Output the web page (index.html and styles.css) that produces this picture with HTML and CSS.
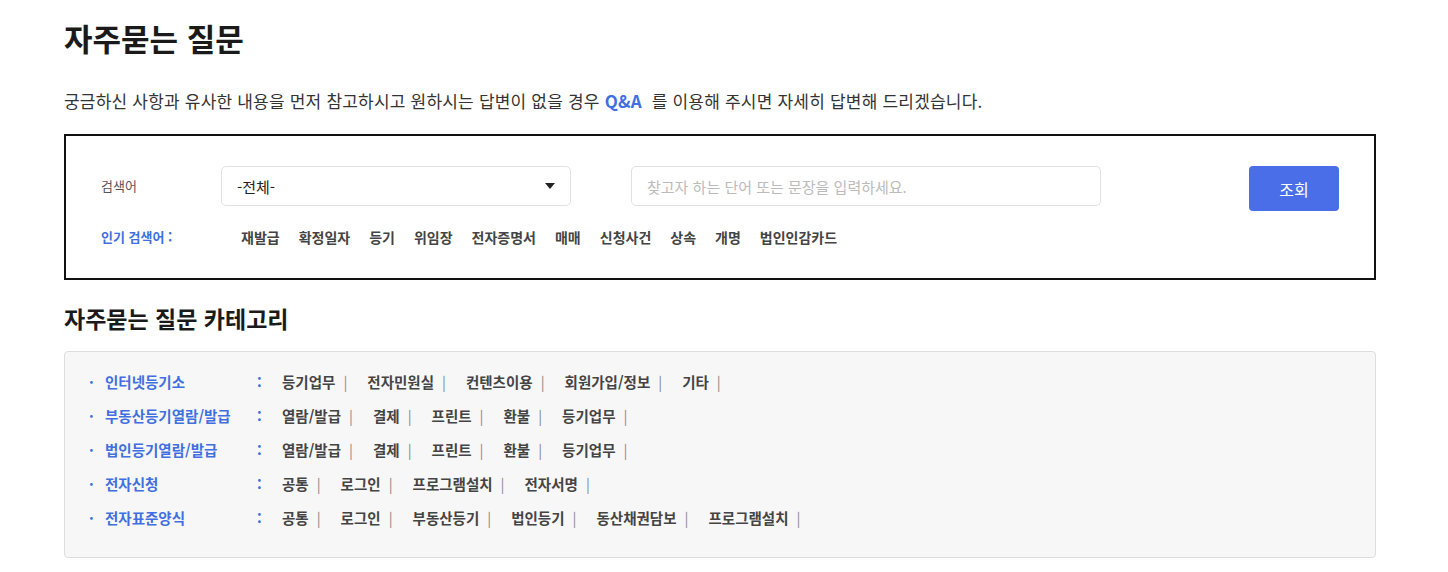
FILE: index.html
```html
<!DOCTYPE html>
<html lang="ko">
<head>
    <meta charset="utf-8">
    <title>자주묻는 질문</title>
    <link rel="stylesheet" href="styles.css">
</head>
<body>
    <div class="main">
        <h1 class="title">자주묻는 질문</h1>
        <p class="desc">궁금하신 사항과 유사한 내용을 먼저 참고하시고 원하시는 답변이 없을 경우 <b class="qna">Q&amp;A</b>&nbsp; 를 이용해 주시면 자세히 답변해 드리겠습니다.</p>

        <div class="search">
            <div class="search-row">
                <span class="label">검색어</span>
                <div class="select">
                    <span>-전체-</span>
                    <span class="arrow"></span>
                </div>
                <input class="keyword" type="text" placeholder="찾고자 하는 단어 또는 문장을 입력하세요.">
                <button class="btn">조회</button>
            </div>
            <div class="popular">
                <span class="label blue">인기 검색어 :</span>
                <ul class="tags">
                    <li>재발급</li>
                    <li>확정일자</li>
                    <li>등기</li>
                    <li>위임장</li>
                    <li>전자증명서</li>
                    <li>매매</li>
                    <li>신청사건</li>
                    <li>상속</li>
                    <li>개명</li>
                    <li>법인인감카드</li>
                </ul>
            </div>
        </div>

        <h2 class="sub">자주묻는 질문 카테고리</h2>
        <div class="cat">
            <div class="cat-row">
                <span class="cat-name">인터넷등기소</span>
                <span class="colon">:</span>
                <span class="item">등기업무<i>|</i></span>
                <span class="item">전자민원실<i>|</i></span>
                <span class="item">컨텐츠이용<i>|</i></span>
                <span class="item">회원가입/정보<i>|</i></span>
                <span class="item">기타<i>|</i></span>
            </div>
            <div class="cat-row">
                <span class="cat-name">부동산등기열람/발급</span>
                <span class="colon">:</span>
                <span class="item">열람/발급<i>|</i></span>
                <span class="item">결제<i>|</i></span>
                <span class="item">프린트<i>|</i></span>
                <span class="item">환불<i>|</i></span>
                <span class="item">등기업무<i>|</i></span>
            </div>
            <div class="cat-row">
                <span class="cat-name">법인등기열람/발급</span>
                <span class="colon">:</span>
                <span class="item">열람/발급<i>|</i></span>
                <span class="item">결제<i>|</i></span>
                <span class="item">프린트<i>|</i></span>
                <span class="item">환불<i>|</i></span>
                <span class="item">등기업무<i>|</i></span>
            </div>
            <div class="cat-row">
                <span class="cat-name">전자신청</span>
                <span class="colon">:</span>
                <span class="item">공통<i>|</i></span>
                <span class="item">로그인<i>|</i></span>
                <span class="item">프로그램설치<i>|</i></span>
                <span class="item">전자서명<i>|</i></span>
            </div>
            <div class="cat-row">
                <span class="cat-name">전자표준양식</span>
                <span class="colon">:</span>
                <span class="item">공통<i>|</i></span>
                <span class="item">로그인<i>|</i></span>
                <span class="item">부동산등기<i>|</i></span>
                <span class="item">법인등기<i>|</i></span>
                <span class="item">동산채권담보<i>|</i></span>
                <span class="item">프로그램설치<i>|</i></span>
            </div>
        </div>
    </div>
</body>
</html>
```

FILE: styles.css
```css
* {
    box-sizing: border-box;
}

body {
    margin: 0;
    font-family: "Noto Sans CJK KR", "Noto Sans", sans-serif;
    color: #222;
    background: #fff;
}

.main {
    width: 1312px;
    margin-left: 64px;
    padding-top: 14px;
}

.title {
    margin: 0;
    font-size: 31px;
    line-height: 48px;
    font-weight: 700;
    color: #1a1a1a;
}

.desc {
    margin: 24px 0 0;
    font-size: 17px;
    letter-spacing: 0.2px;
    line-height: 30px;
    color: #333;
}

.qna {
    color: #3f6fe0;
    font-weight: 700;
}

.search {
    margin-top: 18px;
    height: 146px;
    border: 2px solid #111;
    padding: 30px 35px 0;
}

.search-row {
    display: flex;
    align-items: flex-start;
}

.label {
    width: 120px;
    font-size: 13px;
    color: #555;
    line-height: 40px;
}

.popular .label {
    width: 140px;
}

.blue {
    color: #3f6fe0;
    font-weight: 700;
    line-height: 20px;
}

.select {
    width: 350px;
    height: 40px;
    border: 1px solid #e2e2e2;
    border-radius: 5px;
    display: flex;
    align-items: center;
    justify-content: space-between;
    padding: 0 15px;
    font-size: 15px;
    color: #222;
}

.arrow {
    width: 0;
    height: 0;
    border-left: 5px solid transparent;
    border-right: 5px solid transparent;
    border-top: 6px solid #222;
}

.keyword {
    margin-left: 60px;
    width: 470px;
    height: 40px;
    border: 1px solid #e2e2e2;
    border-radius: 5px;
    padding: 0 15px;
    font-family: inherit;
    font-size: 15px;
    outline: none;
}

.keyword::placeholder {
    color: #bbb;
}

.btn {
    margin-left: auto;
    width: 90px;
    height: 45px;
    border: none;
    border-radius: 4px;
    background: #4a6ee8;
    color: #fff;
    font-family: inherit;
    font-size: 16px;
}

.popular {
    display: flex;
    align-items: center;
    margin-top: 16px;
}

.tags {
    display: flex;
    gap: 19px;
    margin: 0;
    padding: 0;
    list-style: none;
    font-size: 14px;
    font-weight: 700;
    color: #444;
    line-height: 20px;
}

.sub {
    margin: 21px 0 0;
    font-size: 23px;
    line-height: 34px;
    font-weight: 700;
    color: #1a1a1a;
}

.cat {
    margin-top: 16px;
    height: 207px;
    background: #f7f7f7;
    border: 1px solid #dedede;
    border-radius: 4px;
    padding: 12px 24px 0;
}

.cat-row {
    display: flex;
    align-items: center;
    height: 34px;
    font-size: 14.5px;
    font-weight: 700;
}

.cat-name {
    width: 168px;
    color: #3f6fe0;
}

.cat-name::before {
    content: "·";
    display: inline-block;
    width: 16px;
    color: #3f6fe0;
}

.colon {
    width: 25px;
    color: #3f6fe0;
}

.item {
    color: #444;
    margin-right: 20px;
}

.item i {
    font-style: normal;
    font-weight: 400;
    color: #888;
    margin-left: 8px;
}
```
